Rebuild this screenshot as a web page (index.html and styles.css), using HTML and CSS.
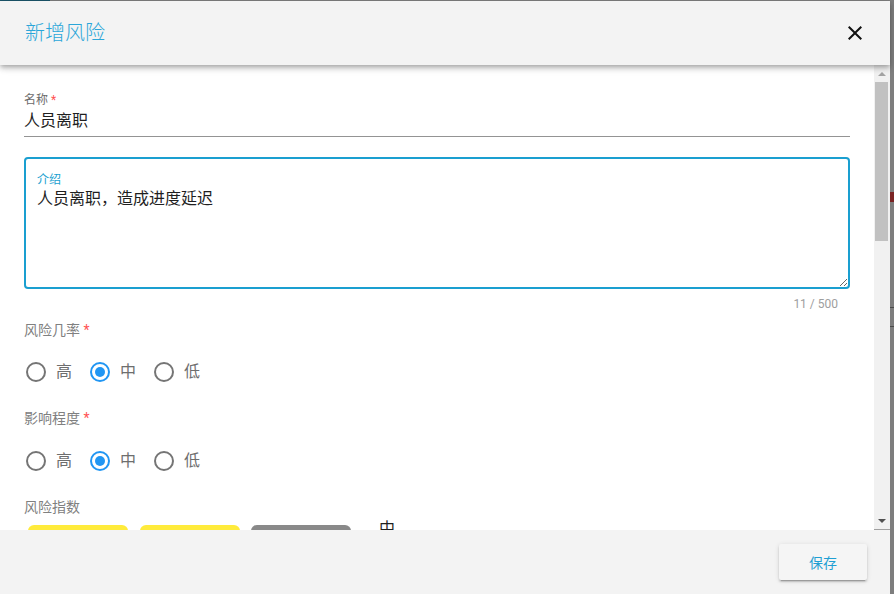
FILE: index.html
```html
<!DOCTYPE html>
<html lang="zh-CN">
<head>
<meta charset="utf-8">
<title>新增风险</title>
<link rel="stylesheet" href="styles.css">
</head>
<body>
<div class="backdrop">
  <div class="bd-tab"></div>
  <div class="bd-red"></div>
  <div class="bd-line bd-line-1"></div>
  <div class="bd-line bd-line-2"></div>
</div>
<div class="dialog">
  <header class="dlg-header">
    <h1 class="dlg-title">新增风险</h1>
    <button class="close-btn" aria-label="关闭">
      <svg width="24" height="24" viewBox="0 0 24 24"><path d="M19 6.41L17.59 5 12 10.59 6.41 5 5 6.41 10.59 12 5 17.59 6.41 19 12 13.41 17.59 19 19 17.59 13.41 12z" fill="#111"/></svg>
    </button>
  </header>
  <div class="dlg-body">
    <main class="form">
      <div class="text-field">
        <label class="tf-label">名称 <span class="req">*</span></label>
        <input class="tf-input" type="text" value="人员离职">
      </div>

      <div class="area-field">
        <label class="area-label">介绍</label>
        <textarea class="area-input">人员离职，造成进度延迟</textarea>
      </div>
      <div class="counter">11 / 500</div>

      <div class="group-label">风险几率 <span class="req">*</span></div>
      <div class="radio-row">
        <div class="radio"><svg class="r-icon" width="24" height="24" viewBox="0 0 24 24"><circle cx="12" cy="12" r="9" fill="none" stroke="#757575" stroke-width="2"/></svg><span class="r-text">高</span></div>
        <div class="radio"><svg class="r-icon" width="24" height="24" viewBox="0 0 24 24"><circle cx="12" cy="12" r="9" fill="none" stroke="#2196f3" stroke-width="2"/><circle cx="12" cy="12" r="5" fill="#2196f3"/></svg><span class="r-text">中</span></div>
        <div class="radio"><svg class="r-icon" width="24" height="24" viewBox="0 0 24 24"><circle cx="12" cy="12" r="9" fill="none" stroke="#757575" stroke-width="2"/></svg><span class="r-text">低</span></div>
      </div>

      <div class="group-label gl-2">影响程度 <span class="req">*</span></div>
      <div class="radio-row rr-2">
        <div class="radio"><svg class="r-icon" width="24" height="24" viewBox="0 0 24 24"><circle cx="12" cy="12" r="9" fill="none" stroke="#757575" stroke-width="2"/></svg><span class="r-text">高</span></div>
        <div class="radio"><svg class="r-icon" width="24" height="24" viewBox="0 0 24 24"><circle cx="12" cy="12" r="9" fill="none" stroke="#2196f3" stroke-width="2"/><circle cx="12" cy="12" r="5" fill="#2196f3"/></svg><span class="r-text">中</span></div>
        <div class="radio"><svg class="r-icon" width="24" height="24" viewBox="0 0 24 24"><circle cx="12" cy="12" r="9" fill="none" stroke="#757575" stroke-width="2"/></svg><span class="r-text">低</span></div>
      </div>

      <div class="group-label gl-2">风险指数</div>
      <div class="chips">
        <span class="chip chip-yellow"></span>
        <span class="chip chip-yellow"></span>
        <span class="chip chip-gray"></span>
        <span class="chip-text">中</span>
      </div>
    </main>
    <div class="scrollbar" aria-hidden="true">
      <div class="sb-btn"><span class="arrow-up"></span></div>
      <div class="sb-track">
        <div class="sb-thumb"></div>
      </div>
      <div class="sb-btn"><span class="arrow-down"></span></div>
    </div>
  </div>
  <footer class="dlg-footer">
    <button class="save-btn">保存</button>
  </footer>
</div>
</body>
</html>
```
FILE: styles.css
```css
html, body {
  margin: 0;
  padding: 0;
  height: 100%;
  overflow: hidden;
}
body {
  background: #7e7e7e;
  font-family: Roboto, "Noto Sans CJK SC", "Noto Sans", sans-serif;
  position: relative;
}
.backdrop .bd-tab {
  position: absolute;
  left: 0; top: 0;
  width: 50px; height: 1px;
  background: #1c566b;
}
.backdrop .bd-red {
  position: absolute;
  left: 890px; top: 192px;
  width: 4px; height: 10px;
  background: #7a2323;
}
.backdrop .bd-line {
  position: absolute;
  left: 890px;
  width: 4px; height: 1px;
  background: #4a4a4a;
}
.bd-line-1 { top: 307px; }
.bd-line-2 { top: 326px; }

.dialog {
  position: absolute;
  left: 0; top: 1px;
  width: 890px;
  height: 593px;
  display: flex;
  flex-direction: column;
  background: #fff;
}
.dlg-header {
  position: relative;
  z-index: 2;
  height: 64px;
  flex: none;
  background: #f3f3f3;
  display: flex;
  align-items: center;
  justify-content: space-between;
  padding: 0 23px 0 25px;
  box-shadow: 0 2px 4px -1px rgba(0,0,0,.2), 0 4px 5px 0 rgba(0,0,0,.14), 0 1px 10px 0 rgba(0,0,0,.12);
}
.dlg-title {
  margin: 0;
  font-size: 20px;
  font-weight: 300;
  color: #2aa6d9;
  line-height: 24px;
}
.close-btn {
  width: 24px; height: 24px;
  border: 0; padding: 0;
  background: transparent;
  display: flex;
}
.dlg-body {
  flex: 1;
  min-height: 0;
  display: flex;
  background: #fff;
}
.form {
  flex: 1;
  min-width: 0;
  overflow: hidden;
  padding: 27px 24px 0 24px;
}
.req { color: #ff5252; }

.text-field {
  display: flex;
  flex-direction: column;
  border-bottom: 1px solid #949494;
  padding-bottom: 5px;
}
.tf-label {
  font-size: 12px;
  line-height: 16px;
  color: #6b6b6b;
  margin-bottom: 3px;
}
.tf-input {
  border: 0;
  outline: none;
  padding: 0;
  margin: 0;
  font-family: inherit;
  font-size: 16px;
  line-height: 20px;
  height: 20px;
  color: #1f1f1f;
  background: transparent;
}

.area-field {
  margin-top: 20px;
  height: 132px;
  box-sizing: border-box;
  border: 2px solid #1a9fd0;
  border-radius: 4px;
  padding: 13px 0 0 11px;
  display: flex;
  flex-direction: column;
}
.area-label {
  font-size: 12px;
  line-height: 16px;
  color: #1a9fd0;
  margin-bottom: 1px;
}
.area-input {
  flex: 1;
  border: 0;
  outline: none;
  padding: 0;
  margin: 0;
  font-family: inherit;
  font-size: 16px;
  line-height: 20px;
  color: #1f1f1f;
  resize: vertical;
  background: transparent;
}
.counter {
  margin-top: 7px;
  text-align: right;
  padding-right: 12px;
  font-size: 12px;
  line-height: 16px;
  color: #9e9e9e;
}
.group-label {
  margin-top: 8px;
  font-size: 14px;
  line-height: 20px;
  color: #808080;
}
.gl-2 { margin-top: 24px; }
.radio-row {
  margin-top: 20px;
  display: flex;
  align-items: center;
  height: 24px;
}
.rr-2 { margin-top: 21px; }
.radio {
  display: flex;
  align-items: center;
  margin-right: 16px;
}
.r-icon { display: block; }
.r-text {
  margin-left: 8px;
  font-size: 16px;
  line-height: 20px;
  color: #6e6e6e;
}
.chips {
  margin-top: 2px;
  display: flex;
  align-items: flex-start;
  padding-left: 4px;
}
.chip {
  width: 100px;
  height: 22px;
  margin-top: 6px;
  border-radius: 6px;
  margin-right: 11px;
}
.chip:first-child { margin-right: 12px; }
.chip-yellow { background: #ffeb3b; }
.chip-gray { background: #898989; }
.chip-text {
  margin-left: 17px;
  font-size: 16px;
  line-height: 20px;
  color: #1f1f1f;
}

.scrollbar {
  width: 16px;
  flex: none;
  background: #f1f1f1;
  display: flex;
  flex-direction: column;
  border-bottom: 1px solid #a0a0a0;
  box-sizing: border-box;
}
.sb-btn {
  height: 17px;
  flex: none;
  display: flex;
  align-items: center;
  justify-content: center;
}
.arrow-up {
  width: 0; height: 0;
  border-left: 4px solid transparent;
  border-right: 4px solid transparent;
  border-bottom: 4px solid #a3a3a3;
}
.arrow-down {
  width: 0; height: 0;
  border-left: 4px solid transparent;
  border-right: 4px solid transparent;
  border-top: 4px solid #505050;
}
.sb-track {
  flex: 1;
  padding: 0 2px 0 1px;
}
.sb-thumb {
  height: 159px;
  background: #c1c1c1;
}

.dlg-footer {
  height: 64px;
  flex: none;
  background: #f3f3f3;
  display: flex;
  align-items: center;
  justify-content: flex-end;
  padding: 0 23px;
}
.save-btn {
  width: 88px;
  height: 36px;
  border: 0;
  border-radius: 2px;
  background: #f5f5f5;
  color: #1f9fd3;
  font-family: inherit;
  font-size: 14px;
  box-shadow: 0 3px 1px -2px rgba(0,0,0,.2), 0 2px 2px 0 rgba(0,0,0,.14), 0 1px 5px 0 rgba(0,0,0,.12);
}
```
